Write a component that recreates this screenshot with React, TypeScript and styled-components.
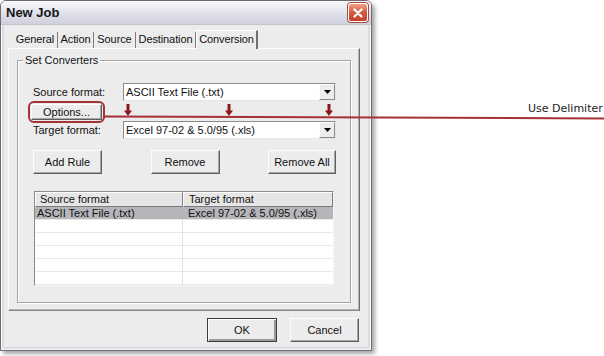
import React from "react";
import styled, { createGlobalStyle, css } from "styled-components";

const GlobalStyle = createGlobalStyle`
  html, body { margin: 0; padding: 0; background: #ffffff; }
  body {
    font-family: "Liberation Sans", Arial, sans-serif;
    font-size: 11px;
    color: #000;
  }
  * { box-sizing: border-box; }
`;

const Page = styled.div`
  position: relative;
  width: 604px;
  height: 356px;
  overflow: hidden;
`;

const Window = styled.div`
  width: 372px;
  height: 351px;
  display: flex;
  flex-direction: column;
  background: #ececec;
  border: 1px solid #6c6c76;
  border-radius: 6px 6px 0 0;
  box-shadow: 3px 3px 4px rgba(0, 0, 0, 0.35), inset 0 0 0 1px #f8f8fa,
    inset 0 0 0 3px #dcdce2;
`;

const TitleBar = styled.div`
  height: 24px;
  flex: none;
  display: flex;
  align-items: center;
  justify-content: space-between;
  padding: 0 3px 0 5px;
  background: linear-gradient(#f8f8fc, #e0e0ea 55%, #d0d0de);
  border-radius: 5px 5px 0 0;
  border-bottom: 1px solid #c4c4d0;
`;

const Title = styled.span`
  font-family: "Liberation Sans", Arial, sans-serif;
  font-weight: bold;
  font-size: 13px;
  color: #161616;
`;

const CloseButton = styled.div`
  width: 20px;
  height: 19px;
  display: flex;
  align-items: center;
  justify-content: center;
  border-radius: 3px;
  background: linear-gradient(#f0a08a, #d55a3e 50%, #c4412a);
  border: 1px solid #ffffff;
  box-shadow: 0 0 0 1px #a0503e;
`;

const Client = styled.div`
  flex: 1;
  display: flex;
  flex-direction: column;
  padding: 0 11px 0 7px;
`;

const TabStrip = styled.div`
  height: 23px;
  flex: none;
  display: flex;
  align-items: flex-end;
  padding-left: 5px;
`;

const Tab = styled.div<{ $active?: boolean; $w: number }>`
  width: ${(p) => p.$w}px;
  height: 16px;
  line-height: 15px;
  text-align: center;
  white-space: nowrap;
  letter-spacing: -0.1px;
  color: #111;
  border-right: 1px solid #7c7c7c;
  ${(p) =>
    p.$active &&
    css`
      height: 19px;
      margin-bottom: -1px;
      line-height: 16px;
      position: relative;
      z-index: 1;
      background: #ececec;
      border-top: 1px solid #fdfdfd;
      border-left: 1px solid #fdfdfd;
      border-right: 2px solid #6e6e6e;
    `}
`;

const TabPage = styled.div`
  width: 352px;
  height: 263px;
  flex: none;
  border: 1px solid;
  border-color: #fdfdfd #6e6e6e #8a8a8a #fdfdfd;
  box-shadow: inset -1px -1px 0 #b4b4b4;
`;

const GroupBox = styled.fieldset`
  margin: 5px 8px 0 8px;
  height: 249px;
  padding: 17px 14px 0 15px;
  border: 1px solid #a2a2a2;
  box-shadow: 1px 1px 0 #ffffff, inset 1px 1px 0 #ffffff;
  min-width: 0;
`;

const Legend = styled.legend`
  padding: 0 2px;
  margin-left: -10px;
  line-height: 12px;
  font-size: 11px;
  color: #111;
`;

const FormRow = styled.div<{ $gap?: number }>`
  display: flex;
  align-items: center;
  height: 18px;
  margin-top: ${(p) => p.$gap ?? 0}px;
`;

const Label = styled.span`
  width: 90px;
  flex: none;
  color: #111;
`;

const Combo = styled.div`
  flex: 1;
  height: 18px;
  display: flex;
  align-items: center;
  background: #ffffff;
  border: 1px solid;
  border-color: #8c8c8c #e6e6e6 #e6e6e6 #8c8c8c;
`;

const ComboText = styled.span`
  flex: 1;
  padding-left: 2px;
  color: #111;
  white-space: nowrap;
`;

const DropButton = styled.div`
  width: 16px;
  height: 16px;
  display: flex;
  align-items: center;
  justify-content: center;
  background: #ececec;
  border: 1px solid;
  border-color: #fdfdfd #8a8a8a #8a8a8a #fdfdfd;
`;

const OptionsRow = styled.div`
  display: flex;
  align-items: center;
  height: 16px;
  margin-top: 3px;
`;

const OptionsCell = styled.div`
  width: 90px;
  flex: none;
`;

const Highlight = styled.div`
  display: inline-flex;
  margin-left: -2px;
  border-radius: 3px;
  outline: 2px solid #a53236;
  outline-offset: 1px;
`;

const ArrowTrack = styled.div`
  flex: 1;
  display: flex;
  justify-content: space-between;
  align-items: flex-start;
  height: 16px;
  padding: 0 3px 0 1px;
`;

const buttonBase = css`
  display: flex;
  align-items: center;
  justify-content: center;
  background: #ececec;
  color: #111;
  font-family: "Liberation Sans", Arial, sans-serif;
  font-size: 11px;
  border: 1px solid;
  border-color: #fdfdfd #5e5e5e #5e5e5e #fdfdfd;
  box-shadow: inset -1px -1px 0 #a6a6a6;
  padding: 0;
`;

const SmallButton = styled.button`
  ${buttonBase};
  width: 71px;
  height: 16px;
  padding-bottom: 1px;
`;

const ActionRow = styled.div`
  display: flex;
  justify-content: space-between;
  margin-top: 11px;
`;

const PushButton = styled.button<{ $w?: number; $default?: boolean }>`
  ${buttonBase};
  width: ${(p) => p.$w ?? 69}px;
  height: 24px;
  ${(p) =>
    p.$default &&
    css`
      border-color: #3c3c3c;
      box-shadow: inset 1px 1px 0 #fdfdfd, inset -2px -2px 0 #9a9a9a;
    `}
`;

const ListBox = styled.div`
  margin: 17px 2px 0 1px;
  height: 95px;
  background: #ffffff;
  border: 1px solid;
  border-color: #8a8a8a #f4f4f4 #f4f4f4 #8a8a8a;
  overflow: hidden;
`;

const ListRow = styled.div<{ $selected?: boolean }>`
  display: grid;
  grid-template-columns: 148px 1fr;
  height: 13px;
  border-bottom: 1px solid #e8e8e8;
  background: ${(p) => (p.$selected ? "#b6b6ba" : "#ffffff")};
`;

const HeaderRow = styled.div`
  display: grid;
  grid-template-columns: 148px 1fr;
  height: 15px;
`;

const HeaderCell = styled.div<{ $pad: number }>`
  background: #e6e6e6;
  border: 1px solid;
  border-color: #fdfdfd #7a7a7a #7a7a7a #fdfdfd;
  padding-left: ${(p) => p.$pad}px;
  line-height: 12px;
  color: #111;
  white-space: nowrap;
`;

const Cell = styled.div<{ $pad: number; $divider?: boolean }>`
  padding-left: ${(p) => p.$pad}px;
  line-height: 12px;
  color: #111;
  white-space: nowrap;
  border-right: ${(p) => (p.$divider ? "1px solid #e2e2e2" : "none")};
`;

const Footer = styled.div`
  display: flex;
  justify-content: flex-end;
  gap: 13px;
  padding: 7px 1px 0 0;
`;

const Callout = styled.div`
  position: absolute;
  inset: 0;
  pointer-events: none;
`;

const CalloutText = styled.span`
  position: absolute;
  left: 528px;
  top: 102px;
  font-family: "DejaVu Sans", Verdana, sans-serif;
  font-size: 11px;
  color: #1c1c1c;
`;

const DownArrow = () => (
  <svg width="8" height="12" viewBox="0 0 8 12">
    <path d="M2.5 0h3v6.5H8L4 12L0 6.5h2.5z" fill="#8c1a1c" />
  </svg>
);

const Caret = () => (
  <svg width="7" height="4" viewBox="0 0 7 4">
    <path d="M0 0h7L3.5 4z" fill="#000" />
  </svg>
);

const tabs = [
  { label: "General", w: 45 },
  { label: "Action", w: 36 },
  { label: "Source", w: 42 },
  { label: "Destination", w: 60 },
  { label: "Conversion", w: 62, active: true },
];

const emptyRows = [0, 1, 2, 3, 4];

export default function App() {
  return (
    <>
      <GlobalStyle />
      <Page>
        <Window>
          <TitleBar>
            <Title>New Job</Title>
            <CloseButton>
              <svg width="10" height="10" viewBox="0 0 10 10">
                <path
                  d="M1.5 1.5L8.5 8.5M8.5 1.5L1.5 8.5"
                  stroke="#fff"
                  strokeWidth="2.2"
                  strokeLinecap="round"
                />
              </svg>
            </CloseButton>
          </TitleBar>
          <Client>
            <TabStrip>
              {tabs.map((t) => (
                <Tab key={t.label} $w={t.w} $active={t.active}>
                  {t.label}
                </Tab>
              ))}
            </TabStrip>
            <TabPage>
              <GroupBox>
                <Legend>Set Converters</Legend>
                <FormRow>
                  <Label>Source format:</Label>
                  <Combo>
                    <ComboText>ASCII Text File (.txt)</ComboText>
                    <DropButton>
                      <Caret />
                    </DropButton>
                  </Combo>
                </FormRow>
                <OptionsRow>
                  <OptionsCell>
                    <Highlight>
                      <SmallButton>Options...</SmallButton>
                    </Highlight>
                  </OptionsCell>
                  <ArrowTrack>
                    <DownArrow />
                    <DownArrow />
                    <DownArrow />
                  </ArrowTrack>
                </OptionsRow>
                <FormRow $gap={1}>
                  <Label>Target format:</Label>
                  <Combo>
                    <ComboText>Excel 97-02 &amp; 5.0/95 (.xls)</ComboText>
                    <DropButton>
                      <Caret />
                    </DropButton>
                  </Combo>
                </FormRow>
                <ActionRow>
                  <PushButton $w={69}>Add Rule</PushButton>
                  <PushButton $w={69}>Remove</PushButton>
                  <PushButton $w={68}>Remove All</PushButton>
                </ActionRow>
                <ListBox>
                  <HeaderRow>
                    <HeaderCell $pad={4}>Source format</HeaderCell>
                    <HeaderCell $pad={5}>Target format</HeaderCell>
                  </HeaderRow>
                  <ListRow $selected>
                    <Cell $pad={2}>ASCII Text File (.txt)</Cell>
                    <Cell $pad={5}>Excel 97-02 &amp; 5.0/95 (.xls)</Cell>
                  </ListRow>
                  {emptyRows.map((r) => (
                    <ListRow key={r}>
                      <Cell $pad={2} $divider />
                      <Cell $pad={5} />
                    </ListRow>
                  ))}
                </ListBox>
              </GroupBox>
            </TabPage>
            <Footer>
              <PushButton $w={70} $default>
                OK
              </PushButton>
              <PushButton $w={69}>Cancel</PushButton>
            </Footer>
          </Client>
        </Window>
        <Callout>
          <svg width="604" height="356" viewBox="0 0 604 356">
            <line
              x1="104"
              y1="116.5"
              x2="604"
              y2="118.5"
              stroke="#a53236"
              strokeWidth="2"
            />
          </svg>
          <CalloutText>Use Delimiter</CalloutText>
        </Callout>
      </Page>
    </>
  );
}
